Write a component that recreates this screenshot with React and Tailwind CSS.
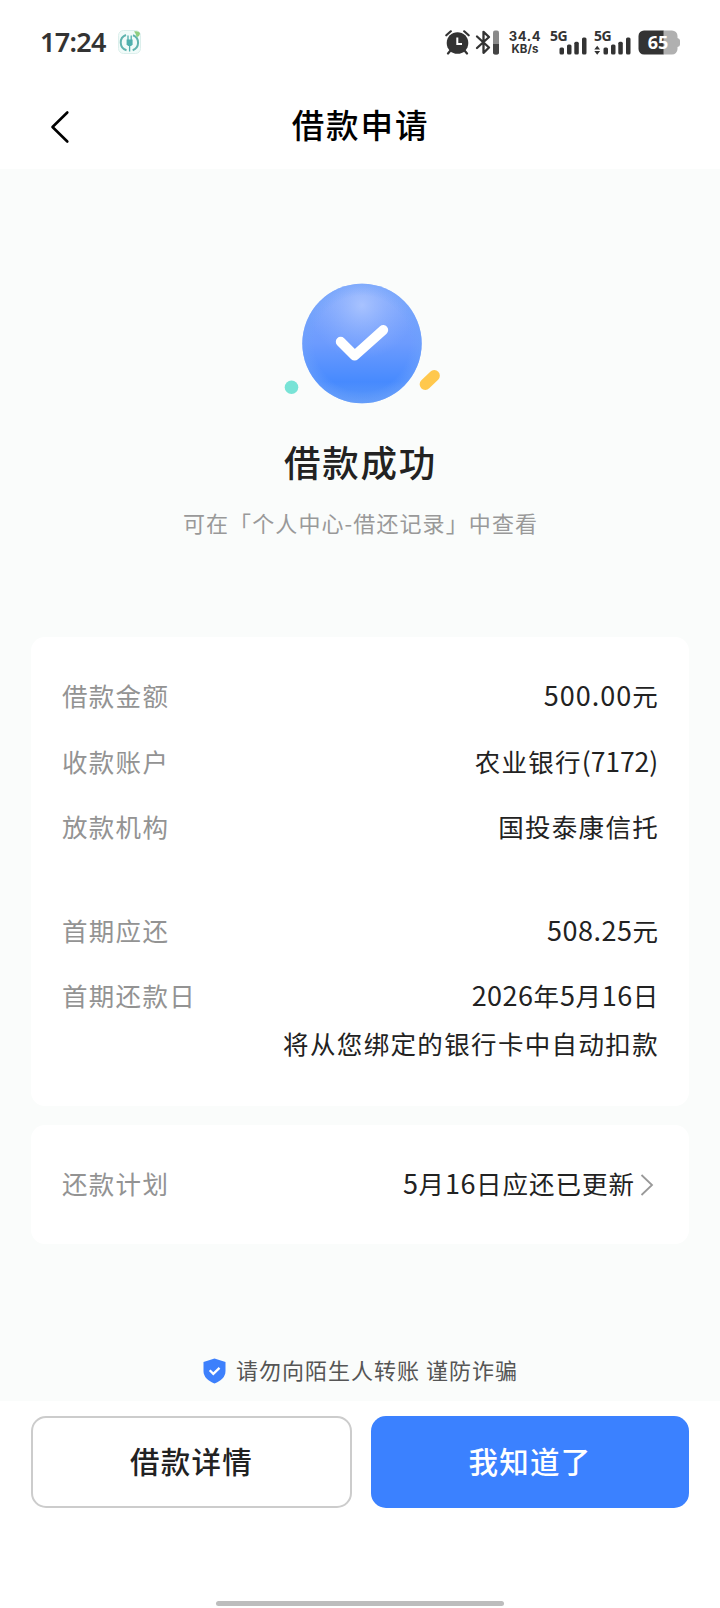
const LOAN_ROWS = [
  { label: '借款金额', amount: '500.00', value: '元' },
  { label: '收款账户', value: '农业银行', tail: '(7172)' },
  { label: '放款机构', value: '国投泰康信托' },
]

function AppBadge() {
  return (
    <svg width="24" height="24" viewBox="0 0 24 24" fill="none">
      <rect x="0.5" y="0.5" width="22" height="23" rx="5" fill="#f1fbf9" stroke="#dcefec" />
      <path d="M8 5A8 8 0 0 0 8.500 20.200M15 5.200A8 8 0 0 1 14.700 20.200" stroke="#5fb3ae" strokeWidth="2" />
      <path d="M8.600 9.500h6v5l-1.500 1.500h-3l-1.500-1.500z" fill="#4fb0ad" />
      <path d="M10 5.500v5M13.200 5.500v5M11.600 15v6.500" stroke="#4fb0ad" strokeWidth="1.300" />
      <path d="M16 1.500c3-1 5 .2 6 1.500-.2 2.500-1.500 4-3.500 4C18 4.500 17.500 3 16 1.500z" fill="#8fce80" />
    </svg>
  )
}

function AlarmIcon() {
  return (
    <svg width="25" height="25" viewBox="0 0 25 25" fill="none">
      <circle cx="12.500" cy="13" r="10.800" fill="#333" />
      <path d="M1.300 5.300 5.800 1.300M23.700 5.300 19.200 1.300" stroke="#333" strokeWidth="2.200" strokeLinecap="round" />
      <path d="M5.500 20.500 3 23.500M19.500 20.500 22 23.500" stroke="#333" strokeWidth="2.200" strokeLinecap="round" />
      <path d="M12.300 7.500V14H17" stroke="#fff" strokeWidth="2" />
    </svg>
  )
}

function BluetoothIcon() {
  return (
    <svg width="25" height="25" viewBox="0 0 25 25" fill="none">
      <path d="M2 6.500 14 17.500 8.500 22.800V1.800L14 7 2 18" stroke="#333" strokeWidth="2.300" strokeLinejoin="round" strokeLinecap="round" />
      <rect x="18" y="0.500" width="6" height="24" rx="2" fill="#8a8a8a" />
      <path d="M18 14h6v8.500a2 2 0 0 1-2 2h-2a2 2 0 0 1-2-2z" fill="#444" />
    </svg>
  )
}

function Signal({ arrows }) {
  return (
    <div className="relative h-[25px] w-[37px]">
      <span className="absolute left-0 top-[-1px] text-[14px] leading-[14px] font-bold tracking-[-0.5px]">5G</span>
      <svg className="absolute inset-0" width="37" height="25" viewBox="0 0 37 25" fill="#333">
        {arrows && <path d="M0.300 19.500 3.200 15.800 6.100 19.500zM0.300 21 3.200 24.700 6.100 21z" />}
        <rect x="9.500" y="17.500" width="4.500" height="7" rx="1.500" />
        <rect x="17" y="14.500" width="4.500" height="10" rx="1.500" />
        <rect x="24.300" y="11.700" width="4.500" height="12.800" rx="1.500" />
        <rect x="32" y="7.500" width="4.500" height="17" rx="1.500" />
      </svg>
    </div>
  )
}

function Battery() {
  return (
    <div className="relative h-[25px] w-[43px]">
      <svg width="43" height="25" viewBox="0 0 43 25">
        <path d="M25 0.500h9a5.500 5.500 0 0 1 5.500 5.500v2q2.500 .5 2.500 2.500v4q0 2-2.500 2.500v2a5.500 5.500 0 0 1-5.500 5.500h-9z" fill="#b0b0b0" />
        <path d="M25.500 0.500H6A5.500 5.500 0 0 0 .5 6v13A5.500 5.500 0 0 0 6 24.500h19.500z" fill="#333" />
      </svg>
      <span className="absolute left-0 top-0 w-[40px] text-center text-[18px] leading-[24px] font-bold text-white">65</span>
    </div>
  )
}

function StatusBar() {
  return (
    <div className="flex h-[84px] items-center pl-[40px] pr-[39px] font-['Noto_Sans','Noto_Sans_CJK_SC',sans-serif] text-[#333]">
      <span className="w-[78px] text-[27px] leading-[28px] font-semibold tracking-[-0.7px]">17:24</span>
      <AppBadge />
      <div className="ml-auto flex items-center">
        <AlarmIcon />
        <div className="ml-[5px]"><BluetoothIcon /></div>
        <div className="ml-[8px] flex w-[34px] flex-col items-center font-['Inter',sans-serif] font-bold">
          <span className="text-[13px] leading-[14px] tracking-[0.7px]">34.4</span>
          <span className="text-[11.500px] leading-[13px]">KB/s</span>
        </div>
        <div className="ml-[8px]"><Signal /></div>
        <div className="ml-[7px]"><Signal arrows /></div>
        <div className="ml-[7px]"><Battery /></div>
      </div>
    </div>
  )
}

function SuccessMark() {
  return (
    <svg width="160" height="130" viewBox="280 280 160 130" fill="none">
      <defs>
        <linearGradient id="disc" x1="0" y1="0" x2="0" y2="1">
          <stop offset="0" stopColor="#86abfc" />
          <stop offset="0.500" stopColor="#6c9bfe" />
          <stop offset="0.820" stopColor="#478afe" />
          <stop offset="1" stopColor="#5b98f8" />
        </linearGradient>
        <radialGradient id="shine" cx="0.500" cy="0.180" r="0.450">
          <stop offset="0" stopColor="#b0c8ff" stopOpacity="0.850" />
          <stop offset="1" stopColor="#8fb1fd" stopOpacity="0" />
        </radialGradient>
        <radialGradient id="rim" cx="0.500" cy="0.500" r="0.500">
          <stop offset="0.800" stopColor="#6ea2fb" stopOpacity="0" />
          <stop offset="1" stopColor="#6ea2fb" stopOpacity="0.550" />
        </radialGradient>
      </defs>
      <circle cx="362" cy="343.500" r="59.700" fill="url(#disc)" />
      <circle cx="362" cy="343.500" r="59.700" fill="url(#shine)" />
      <circle cx="362" cy="343.500" r="59.700" fill="url(#rim)" />
      <path d="M340.700 341.700 354.700 355.700 383.300 330" stroke="#fff" strokeWidth="9.800" strokeLinecap="round" strokeLinejoin="round" />
      <circle cx="291.500" cy="387.300" r="6.800" fill="#78e3d6" />
      <path d="M425.300 384.300 434.200 375.700" stroke="#ffc84d" strokeWidth="11.300" strokeLinecap="round" />
    </svg>
  )
}

function Label({ children }) {
  return <span className="tracking-[1.3px] text-[#939393]">{children}</span>
}

function Num({ children }) {
  return <span className="text-[27px] tracking-[0.5px]">{children}</span>
}

export default function App() {
  return (
    <div className="flex h-[1608px] w-[720px] flex-col overflow-hidden bg-white font-['Noto_Sans_CJK_SC',sans-serif] text-[#222]">
      <StatusBar />

      <header className="grid h-[85px] grid-cols-[120px_1fr_120px] items-center">
        <svg className="ml-[50px]" width="20" height="34" viewBox="0 0 20 34" fill="none">
          <path d="M17.300 2.500 2.500 17 17.300 31.500" stroke="#000" strokeWidth="2.600" strokeLinecap="round" strokeLinejoin="round" />
        </svg>
        <h1 className="pb-[5px] pl-[1px] text-center text-[32.500px] font-medium tracking-[1.900px] text-black">借款申请</h1>
      </header>

      <main className="flex h-[1232px] flex-col bg-[#fafcfb] px-[31px] pt-[111px]">
        <div className="flex h-[357px] flex-col items-center">
          <SuccessMark />
          <h2 className="mt-[26px] pl-[1px] text-[36.500px] leading-[52px] font-medium tracking-[1.800px]">借款成功</h2>
          <p className="mt-[18px] pl-[1px] text-[22px] leading-[32px] tracking-[1.100px] text-[#999]">可在「个人中心-借还记录」中查看</p>
        </div>

        <section className="h-[469px] rounded-[14px] bg-white pl-[31px] pr-[30px] pt-[39px] text-[25.500px] leading-[38px]">
          <div className="flex flex-col gap-[27.500px]">
            {LOAN_ROWS.map((row) => (
              <div key={row.label} className="flex h-[38px] justify-between">
                <Label>{row.label}</Label>
                <span className="tracking-[1.300px]">
                  {row.amount && <span className="text-[27px] tracking-[1px]">{row.amount}</span>}
                  {row.value}
                  {row.tail && <span className="mr-[1px] text-[26.500px] tracking-[-0.100px]">{row.tail}</span>}
                </span>
              </div>
            ))}
          </div>
          <div className="mt-[66px] flex h-[38px] justify-between">
            <Label>首期应还</Label>
            <span className="tracking-[1.100px]"><Num>508.25</Num>元</span>
          </div>
          <div className="mt-[27px] flex h-[38px] justify-between">
            <Label>首期还款日</Label>
            <span className="tracking-[0.800px]"><Num>2026</Num>年<Num>5</Num>月<Num>16</Num>日</span>
          </div>
          <p className="mt-[10px] text-right tracking-[1.350px]">将从您绑定的银行卡中自动扣款</p>
        </section>

        <section className="mt-[19px] flex h-[119px] items-center rounded-[14px] bg-white px-[31px] text-[25.500px] leading-[38px]">
          <div className="flex h-[42px] flex-1 justify-between">
            <Label>还款计划</Label>
            <span className="tracking-[1px]"><Num>5</Num>月<Num>16</Num>日应还已更新</span>
          </div>
          <svg className="ml-[5px] mr-[4px]" width="14" height="22" viewBox="0 0 14 22" fill="none">
            <path d="M1.500 1 12 11 1.500 21" stroke="#999" strokeWidth="1.800" />
          </svg>
        </section>

        <div className="mt-[111px] flex items-center justify-center pl-[1px] text-[22px] leading-[32px] text-[#555]">
          <svg className="mt-[2px]" width="23" height="26" viewBox="0 0 23 26" fill="none">
            <path d="M11.500.5 22.500 4v9c0 6-4.500 9.800-11 12.500C5 22.800.5 19 .5 13V4z" fill="#3d80fc" />
            <path d="M6.700 12.300 10.300 15.800 16.500 9.800" stroke="#fff" strokeWidth="2.300" />
          </svg>
          <span className="-mt-[2px] ml-[10px] tracking-[1px]">请勿向陌生人转账 谨防诈骗</span>
        </div>
      </main>

      <footer className="flex flex-1 flex-col px-[31px] pt-[15px]">
        <div className="grid grid-cols-[321px_318px] gap-[19px]">
          <button className="h-[92px] rounded-[15px] border-2 border-[#ccc] pb-[3px] text-[29.500px] font-medium tracking-[1.200px]">借款详情</button>
          <button className="h-[92px] rounded-[15px] bg-[#3b81ff] pb-[3px] text-[29.500px] font-medium tracking-[1.200px] text-white">我知道了</button>
        </div>
        <div className="mt-auto mb-[2px] h-[5px] w-[288px] self-center rounded-full bg-[#bdbdbd]" />
      </footer>
    </div>
  )
}
